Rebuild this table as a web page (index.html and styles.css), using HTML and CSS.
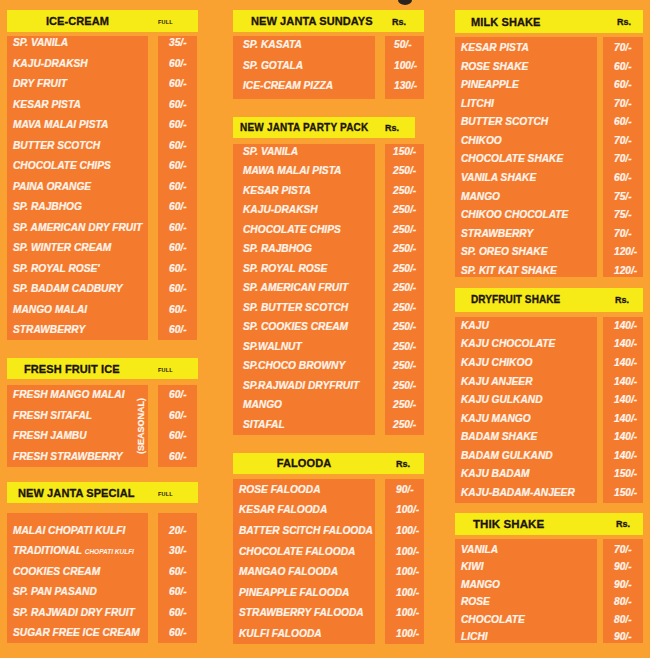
FILE: index.html
```html
<!DOCTYPE html>
<html>
<head>
<meta charset="utf-8">
<link rel="stylesheet" href="styles.css">
</head>
<body>
<div class="logo-tip"></div>
<div class="menu">
  <div class="col col-1">
    <section class="sec s-ice">
      <div class="head"><div class="h-name center">ICE-CREAM</div><div class="h-price full">FULL</div></div>
      <div class="body">
        <div class="names">
          <div>SP. VANILA</div><div>KAJU-DRAKSH</div><div>DRY FRUIT</div><div>KESAR PISTA</div><div>MAVA MALAI PISTA</div><div>BUTTER SCOTCH</div><div>CHOCOLATE CHIPS</div><div>PAINA ORANGE</div><div>SP. RAJBHOG</div><div>SP. AMERICAN DRY FRUIT</div><div>SP. WINTER CREAM</div><div>SP. ROYAL ROSE'</div><div>SP. BADAM CADBURY</div><div>MANGO MALAI</div><div>STRAWBERRY</div>
        </div>
        <div class="prices">
          <div>35/-</div><div>60/-</div><div>60/-</div><div>60/-</div><div>60/-</div><div>60/-</div><div>60/-</div><div>60/-</div><div>60/-</div><div>60/-</div><div>60/-</div><div>60/-</div><div>60/-</div><div>60/-</div><div>60/-</div>
        </div>
      </div>
    </section>
    <section class="sec s-fresh">
      <div class="head"><div class="h-name">FRESH FRUIT ICE</div><div class="h-price full">FULL</div></div>
      <div class="body">
        <div class="names">
          <div>FRESH MANGO MALAI</div><div>FRESH SITAFAL</div><div>FRESH JAMBU</div><div>FRESH STRAWBERRY</div>
          <span class="seasonal">(SEASONAL)</span>
        </div>
        <div class="prices">
          <div>60/-</div><div>60/-</div><div>60/-</div><div>60/-</div>
        </div>
      </div>
    </section>
    <section class="sec s-special">
      <div class="head"><div class="h-name">NEW JANTA SPECIAL</div><div class="h-price full">FULL</div></div>
      <div class="body">
        <div class="names">
          <div>MALAI CHOPATI KULFI</div><div>TRADITIONAL <small>CHOPATI KULFI</small></div><div>COOKIES CREAM</div><div>SP. PAN PASAND</div><div>SP. RAJWADI DRY FRUIT</div><div>SUGAR FREE ICE CREAM</div>
        </div>
        <div class="prices">
          <div>20/-</div><div>30/-</div><div>60/-</div><div>60/-</div><div>60/-</div><div>60/-</div>
        </div>
      </div>
    </section>
  </div>

  <div class="col col-2">
    <section class="sec s-sundays">
      <div class="head"><div class="h-name">NEW JANTA SUNDAYS</div><div class="h-price">Rs.</div></div>
      <div class="body">
        <div class="names">
          <div>SP. KASATA</div><div>SP. GOTALA</div><div>ICE-CREAM PIZZA</div>
        </div>
        <div class="prices">
          <div>50/-</div><div>100/-</div><div>130/-</div>
        </div>
      </div>
    </section>
    <section class="sec s-party">
      <div class="head"><div class="h-name">NEW JANTA PARTY PACK</div><div class="h-price">Rs.</div></div>
      <div class="body">
        <div class="names">
          <div>SP. VANILA</div><div>MAWA MALAI PISTA</div><div>KESAR PISTA</div><div>KAJU-DRAKSH</div><div>CHOCOLATE CHIPS</div><div>SP. RAJBHOG</div><div>SP. ROYAL ROSE</div><div>SP. AMERICAN FRUIT</div><div>SP. BUTTER SCOTCH</div><div>SP. COOKIES CREAM</div><div>SP.WALNUT</div><div>SP.CHOCO BROWNY</div><div>SP.RAJWADI DRYFRUIT</div><div>MANGO</div><div>SITAFAL</div>
        </div>
        <div class="prices">
          <div>150/-</div><div>250/-</div><div>250/-</div><div>250/-</div><div>250/-</div><div>250/-</div><div>250/-</div><div>250/-</div><div>250/-</div><div>250/-</div><div>250/-</div><div>250/-</div><div>250/-</div><div>250/-</div><div>250/-</div>
        </div>
      </div>
    </section>
    <section class="sec s-falooda">
      <div class="head"><div class="h-name center">FALOODA</div><div class="h-price">Rs.</div></div>
      <div class="body">
        <div class="names">
          <div>ROSE FALOODA</div><div>KESAR FALOODA</div><div>BATTER SCITCH FALOODA</div><div>CHOCOLATE FALOODA</div><div>MANGAO FALOODA</div><div>PINEAPPLE FALOODA</div><div>STRAWBERRY FALOODA</div><div>KULFI FALOODA</div>
        </div>
        <div class="prices">
          <div>90/-</div><div>100/-</div><div>100/-</div><div>100/-</div><div>100/-</div><div>100/-</div><div>100/-</div><div>100/-</div>
        </div>
      </div>
    </section>
  </div>

  <div class="col col-3">
    <section class="sec s-milk">
      <div class="head"><div class="h-name">MILK SHAKE</div><div class="h-price">Rs.</div></div>
      <div class="body">
        <div class="names">
          <div>KESAR PISTA</div><div>ROSE SHAKE</div><div>PINEAPPLE</div><div>LITCHI</div><div>BUTTER SCOTCH</div><div>CHIKOO</div><div>CHOCOLATE SHAKE</div><div>VANILA SHAKE</div><div>MANGO</div><div>CHIKOO CHOCOLATE</div><div>STRAWBERRY</div><div>SP. OREO SHAKE</div><div>SP. KIT KAT SHAKE</div>
        </div>
        <div class="prices">
          <div>70/-</div><div>60/-</div><div>60/-</div><div>70/-</div><div>60/-</div><div>70/-</div><div>70/-</div><div>60/-</div><div>75/-</div><div>75/-</div><div>70/-</div><div>120/-</div><div>120/-</div>
        </div>
      </div>
    </section>
    <section class="sec s-dry">
      <div class="head"><div class="h-name">DRYFRUIT SHAKE</div><div class="h-price">Rs.</div></div>
      <div class="body">
        <div class="names">
          <div>KAJU</div><div>KAJU CHOCOLATE</div><div>KAJU CHIKOO</div><div>KAJU ANJEER</div><div>KAJU GULKAND</div><div>KAJU MANGO</div><div>BADAM SHAKE</div><div>BADAM GULKAND</div><div>KAJU BADAM</div><div>KAJU-BADAM-ANJEER</div>
        </div>
        <div class="prices">
          <div>140/-</div><div>140/-</div><div>140/-</div><div>140/-</div><div>140/-</div><div>140/-</div><div>140/-</div><div>140/-</div><div>150/-</div><div>150/-</div>
        </div>
      </div>
    </section>
    <section class="sec s-thik">
      <div class="head"><div class="h-name">THIK SHAKE</div><div class="h-price">Rs.</div></div>
      <div class="body">
        <div class="names">
          <div>VANILA</div><div>KIWI</div><div>MANGO</div><div>ROSE</div><div>CHOCOLATE</div><div>LICHI</div>
        </div>
        <div class="prices">
          <div>70/-</div><div>90/-</div><div>90/-</div><div>80/-</div><div>80/-</div><div>90/-</div>
        </div>
      </div>
    </section>
  </div>
</div>
</body>
</html>
```
FILE: styles.css
```css
* { box-sizing: border-box; margin: 0; padding: 0; }
html, body { background: #f9a232; }
body {
  width: 650px;
  height: 658px;
  overflow: hidden;
  position: relative;
  font-family: "Liberation Sans", Arial, sans-serif;
}

.logo-tip {
  position: absolute;
  left: 398px;
  top: -5px;
  width: 14px;
  height: 10px;
  border-radius: 50%;
  background: #2b2320;
}

.menu {
  display: flex;
  align-items: flex-start;
  padding: 10px 0 0 7px;
}

.col { display: flex; flex-direction: column; }
.col-1 { width: 191px; --nw: 141px; --cg: 10px; --pw: 39px; }
.col-2 { width: 191px; margin-left: 35px; --nw: 142px; --cg: 10px; --pw: 39px; }
.col-3 { width: 188px; margin-left: 31px; --nw: 142px; --cg: 6px; --pw: 40px; }

.sec {
  --hh: 22px; --hgap: 4px; --mt: 0px;
  --pt: 0px; --pb: 0px; --rh: 14px; --g: 6px;
  --hp: 10px; --pp: 10px; --np: 6px; --rp: 8px;
  margin-top: var(--mt);
}

.head {
  display: flex;
  align-items: center;
  height: var(--hh);
  background: #f6ea17;
  color: #1d140c;
  font-weight: 700;
  white-space: nowrap;
  -webkit-text-stroke: 0.3px #1d140c;
}
.h-name {
  width: calc(var(--nw) + var(--cg));
  padding-left: var(--hp);
  font-size: 11px;
  letter-spacing: 0.1px;
}
.h-name.center { text-align: center; padding-left: 0; padding-right: var(--cg); }
.h-price {
  flex: 1;
  padding-left: var(--rp);
  font-size: 9px;
  padding-top: 1px;
}
.h-price.full { font-size: 5.5px; letter-spacing: 0.2px; padding-top: 2px; -webkit-text-stroke: 0; }

.body {
  display: grid;
  grid-template-columns: var(--nw) var(--pw);
  column-gap: var(--cg);
  margin-top: var(--hgap);
}
.names, .prices {
  display: flex;
  flex-direction: column;
  gap: var(--g);
  padding-top: var(--pt);
  padding-bottom: var(--pb);
  background: #f47b2d;
  color: #fff4ec;
  font-weight: 700;
  font-style: italic;
  font-size: 10.2px;
  white-space: nowrap;
  -webkit-text-stroke: 0.2px #fff4ec;
}
.names { padding-left: var(--np); position: relative; }
.prices { padding-left: var(--pp); }
.names > div, .prices > div { height: var(--rh); line-height: var(--rh); }
.names small { font-size: 6.5px; -webkit-text-stroke: 0; }

.seasonal {
  position: absolute;
  right: 1px;
  top: 6px;
  writing-mode: vertical-rl;
  transform: rotate(180deg);
  font-size: 9px;
  font-style: normal;
  line-height: 11px;
  height: 70px;
  text-align: center;
}

/* left column */
.s-ice { --hh: 22px; --hgap: 4px; --pt: 0px; --g: 6.5px; --pb: 3px; --pp: 11px; --rp: 0px; }
.s-fresh { --mt: 18px; --hh: 21px; --hgap: 6px; --hp: 17px; --pt: 3px; --g: 6.7px; --pb: 3px; --pp: 11px; --rp: 0px; }
.s-special { --mt: 15px; --hh: 21px; --hgap: 10px; --hp: 11px; --pt: 11px; --g: 6.4px; --pb: 3px; --pp: 11px; --rp: 0px; }

/* middle column */
.s-sundays { --hh: 22px; --hgap: 4px; --hp: 18px; --rp: 7px; --np: 10px; --pp: 9px; --pt: 2px; --g: 6.7px; --pb: 6px; }
.s-party { --mt: 17.5px; --hh: 21px; --hgap: 6px; --hp: 7px; --rp: -2px; --np: 10px; --pp: 8px; --pt: 1px; --g: 5.5px; --pb: 3px; }
.s-party .head { width: 182px; }
.s-party .h-name { font-size: 10px; letter-spacing: 0.2px; }
.s-falooda { --mt: 18px; --hh: 21px; --hgap: 5px; --rp: 11px; --np: 6px; --pp: 11px; --pt: 4px; --g: 6.57px; --pb: 3px; }

/* right column */
.s-milk { --hh: 23px; --hgap: 4px; --hp: 16px; --rp: 14px; --rh: 12px; --pt: 5px; --g: 6.58px; --pb: 0px; --pp: 11px; }
.s-dry { --mt: 11px; --hh: 24px; --hgap: 5px; --hp: 16px; --rp: 12px; --rh: 12px; --pt: 3px; --g: 6.56px; --pb: 4px; --pp: 11px; }
.s-dry .h-name { font-size: 10px; }
.s-thik { --mt: 10px; --hh: 22px; --hgap: 4px; --hp: 18px; --rp: 13px; --rh: 12px; --pt: 5px; --g: 5.5px; --pb: 0px; --pp: 11px; }
.s-thik .h-name { font-size: 11.5px; }
```
